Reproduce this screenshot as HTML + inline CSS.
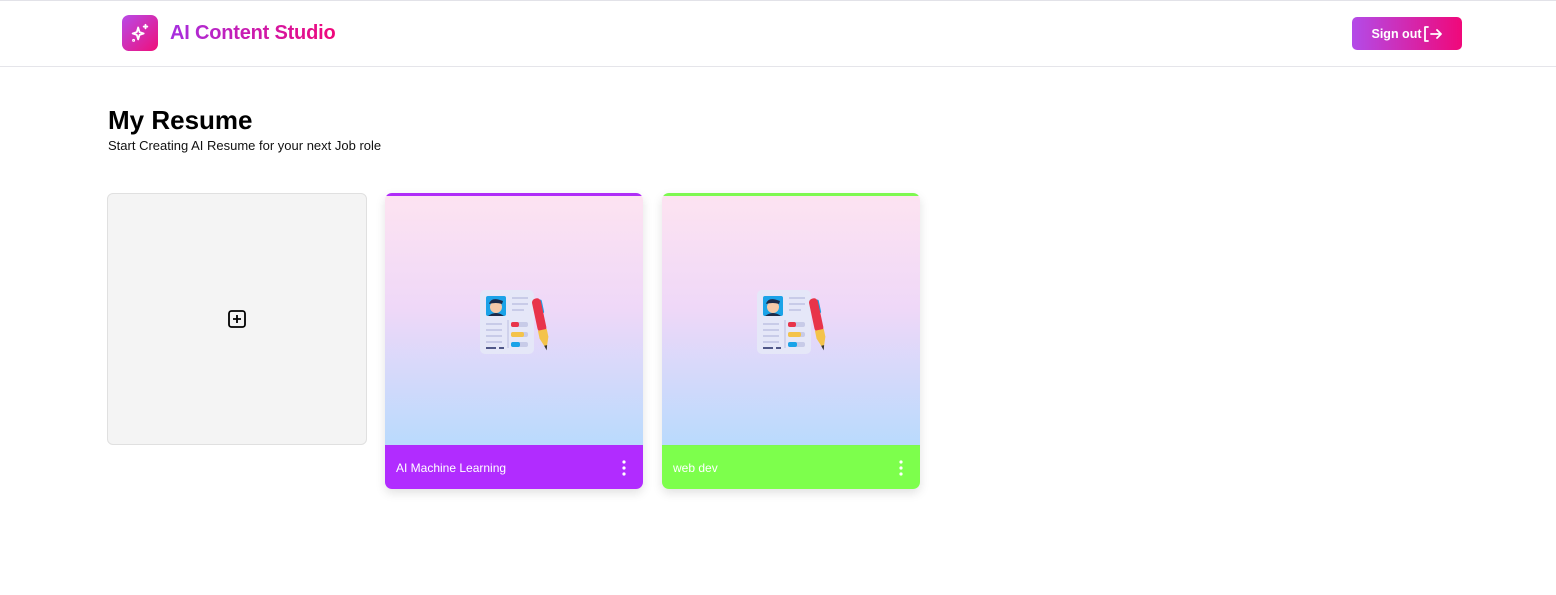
<!DOCTYPE html>
<html><head><meta charset="utf-8"><style>
*{margin:0;padding:0;box-sizing:border-box}
body{width:1556px;height:595px;background:#fff;font-family:"Liberation Sans",sans-serif;position:relative;overflow:hidden}
.hdr{position:absolute;left:0;top:0;width:1556px;height:67px;border-top:1px solid #e2e2e8;border-bottom:1px solid #e5e5ea}
.logo{position:absolute;left:122px;top:15px;width:36px;height:36px;border-radius:7px;background:linear-gradient(135deg,#b84ae8,#ef0f7a);display:flex;align-items:center;justify-content:center}
.brand{position:absolute;left:170px;top:22px;font-size:20px;font-weight:bold;background:linear-gradient(90deg,#a62fe0,#f0077a);-webkit-background-clip:text;color:transparent;letter-spacing:-0.2px}
.btn{position:absolute;left:1352px;top:17px;width:110px;height:33px;border-radius:5px;background:linear-gradient(90deg,#b34be8,#f0087a);color:#fff;font-size:12.5px;font-weight:bold;display:flex;align-items:center;justify-content:center;gap:1px}
h1{position:absolute;left:108px;top:105px;font-size:26px;font-weight:bold;color:#000}
.sub{position:absolute;left:108px;top:138px;font-size:13px;color:#111}
.add{position:absolute;left:107px;top:193px;width:260px;height:252px;background:#f4f4f4;border:1px solid #e0e0e0;border-radius:6px;display:flex;align-items:center;justify-content:center}
.card{position:absolute;top:193px;width:258px;height:296px;border-radius:7px;overflow:hidden;box-shadow:0 4px 10px rgba(0,0,0,.12)}
.card .top{height:253px;border-top:3px solid;background:linear-gradient(180deg,#fde3f1 0%,#efd8f8 45%,#b9dafd 100%);display:flex;align-items:center;justify-content:center;border-bottom:1px solid #fff}
.card .ft{height:43px;color:#fff;font-size:12px;display:flex;align-items:center;justify-content:space-between;padding:0 17px 0 11px}
</style></head><body>
<div class="hdr"></div>
<div class="logo"><svg width="22" height="22" viewBox="0 0 24 24" fill="none" stroke="#fff" stroke-width="2" stroke-linejoin="round" stroke-linecap="round"><path d="M10 6 L11.5 11 L16 12.5 L11.5 14 L10 19 L8.5 14 L4 12.5 L8.5 11 Z"/><path d="M18 3v4M16 5h4"/><circle cx="5" cy="20" r="0.6"/></svg></div>
<div class="brand">AI Content Studio</div>
<div class="btn">Sign out<svg width="20" height="18" viewBox="0 0 20 18" fill="none" stroke="#fff" stroke-width="1.8" stroke-linecap="round" stroke-linejoin="round"><path d="M5 2H2v14h3M8 9h10M14 5l4 4-4 4"/></svg></div>
<h1>My Resume</h1>
<div class="sub">Start Creating AI Resume for your next Job role</div>
<div class="add"><svg width="20" height="20" viewBox="0 0 20 20" fill="none" stroke="#000" stroke-width="1.8"><rect x="2" y="2" width="16" height="16" rx="2.5"/><path d="M10 6v8M6 10h8"/></svg></div>
<svg width="0" height="0" style="position:absolute"><defs><g id="res">
<rect x="0" y="4" width="54" height="64" rx="5" fill="#e5e7f8"/>
<rect x="6" y="10" width="20" height="20" rx="2" fill="#1aa3e8"/>
<circle cx="16" cy="21" r="6" fill="#f6c9a8"/><path d="M9 18q2-8 14-3l-1 3q-6-2-13 0z" fill="#1d2b4a"/><path d="M8 30q8-6 16 0z" fill="#1d2b4a"/>
<path d="M32 12h16M32 18h16M32 24h12" stroke="#c8cbe8" stroke-width="2"/>
<path d="M6 38h16M6 44h16M6 50h16M6 56h16" stroke="#c8cbe8" stroke-width="2"/>
<path d="M6 62h10M19 62h5" stroke="#505888" stroke-width="2"/>
<path d="M28 34v28" stroke="#c8cbe8" stroke-width="1.5"/>
<rect x="31" y="36" width="17" height="5" rx="2" fill="#c8cbe8"/><rect x="31" y="36" width="8" height="5" rx="2" fill="#e8344a"/>
<rect x="31" y="46" width="17" height="5" rx="2" fill="#c8cbe8"/><rect x="31" y="46" width="13" height="5" rx="2" fill="#f4c34a"/>
<rect x="31" y="56" width="17" height="5" rx="2" fill="#c8cbe8"/><rect x="31" y="56" width="9" height="5" rx="2" fill="#1aa3e8"/>
<g transform="rotate(-12 61 40)">
<rect x="64" y="14" width="3" height="14" rx="1.5" fill="#1aa3e8"/>
<rect x="57" y="12" width="9" height="34" rx="4" fill="#e8344a"/>
<path d="M57 44h9v8l-4.5 12-4.5-12z" fill="#f4c34a"/><path d="M60 60l1.5 5 1.5-5z" fill="#333"/></g>
</g></defs></svg>
<div class="card" style="left:385px"><div class="top" style="border-color:#b02cf8"><svg width="72" height="70" viewBox="-2 0 72 70"><use href="#res"/></svg></div><div class="ft" style="background:#b12cff"><span>AI Machine Learning</span><svg width="4" height="16"><circle cx="2" cy="2" r="1.6" fill="#fff"/><circle cx="2" cy="8" r="1.6" fill="#fff"/><circle cx="2" cy="14" r="1.6" fill="#fff"/></svg></div></div>
<div class="card" style="left:662px"><div class="top" style="border-color:#7ef850"><svg width="72" height="70" viewBox="-2 0 72 70"><use href="#res"/></svg></div><div class="ft" style="background:#7dff4c"><span>web dev</span><svg width="4" height="16"><circle cx="2" cy="2" r="1.6" fill="#fff"/><circle cx="2" cy="8" r="1.6" fill="#fff"/><circle cx="2" cy="14" r="1.6" fill="#fff"/></svg></div></div>
</body></html>
